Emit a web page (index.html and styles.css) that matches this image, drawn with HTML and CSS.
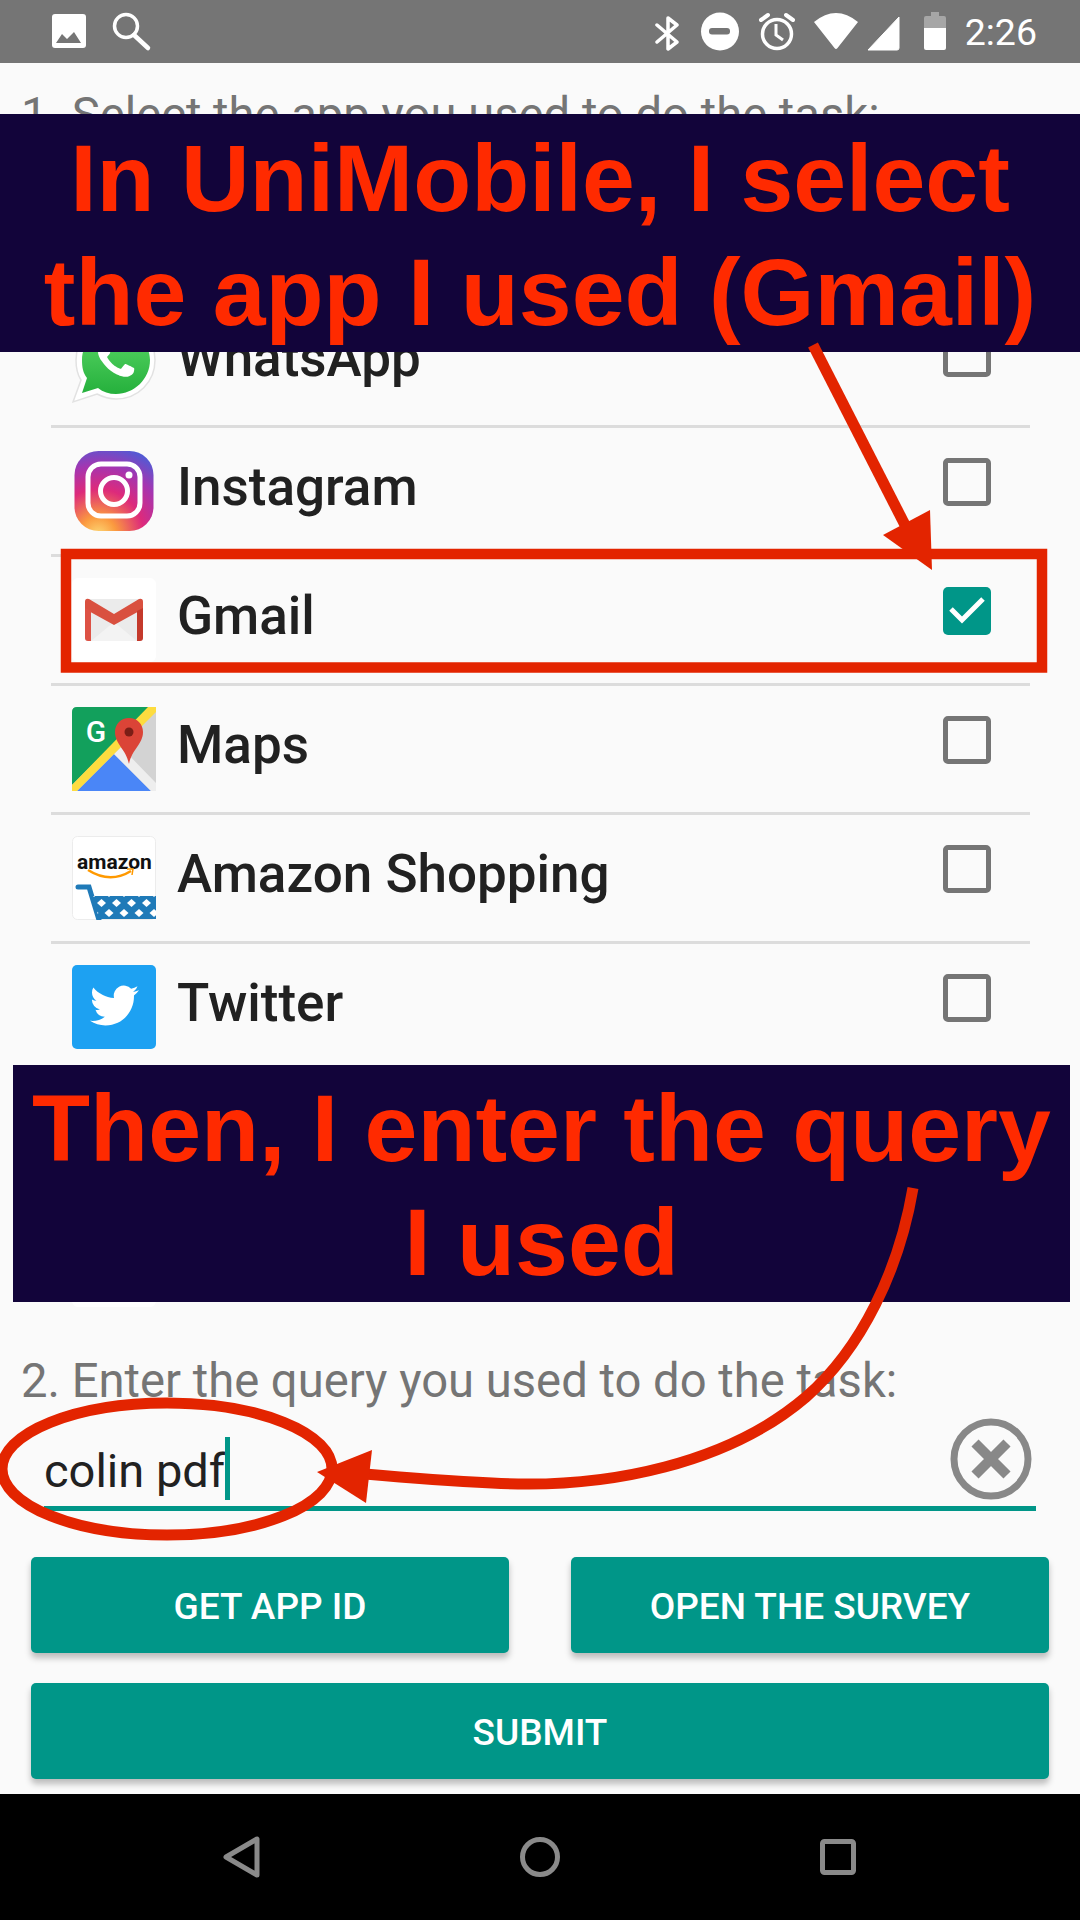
FILE: index.html

```html
<!DOCTYPE html>
<html lang="en">
<head>
  <meta charset="UTF-8">
  <meta name="viewport" content="width=device-width, initial-scale=1.0">
  <title>UniMobile</title>
  <link rel="stylesheet" href="styles.css">
</head>
<body>
  <div class="screen">

    <div class="status-bar">
      <svg class="status-left" viewBox="52 12 100 40">
        <rect x="52" y="14" width="34" height="34" rx="3" fill="#fff"/>
        <polygon points="56,43 62,34 67,39 74,32 81,43" fill="#757575"/>
        <circle cx="126" cy="26" r="11.5" fill="none" stroke="#fff" stroke-width="3.5"/>
        <line x1="134" y1="35" x2="148" y2="48" stroke="#fff" stroke-width="4.5" stroke-linecap="round"/>
      </svg>
      <div class="status-right">
        <svg class="status-icons" viewBox="654 12 291 40">
          <path d="M656 25 L676 42 L667 49 V18 L676 25 L656 42" fill="none" stroke="#fff" stroke-width="3.5" stroke-linejoin="round" stroke-linecap="round"/>
          <circle cx="719" cy="31.5" r="19" fill="#fff"/>
          <rect x="708" y="28" width="21" height="6.5" rx="3" fill="#757575"/>
          <circle cx="776" cy="34" r="14.5" fill="none" stroke="#fff" stroke-width="3.5"/>
          <path d="M775 24 V35 L782 40" fill="none" stroke="#fff" stroke-width="3"/>
          <path d="M760 20 L767 15 M785 15 L792 20" stroke="#fff" stroke-width="4" stroke-linecap="round"/>
          <path d="M813 22 Q835 4 857 22 L836.500 48 Q835 50 833.500 48 Z" fill="#fff"/>
          <path d="M898 17 V48 Q898 50 896 50 H867 Z" fill="#fff" stroke="#fff" stroke-width="1" stroke-linejoin="round"/>
          <path d="M930 16 V12 H938 V16 H943 Q945 16 945 18 V28 H923 V18 Q923 16 925 16 Z" fill="#a6a6a6"/>
          <path d="M923 28 H945 V48 Q945 50 943 50 H925 Q923 50 923 48 Z" fill="#fff"/>
        </svg>
        <span class="clock">2:26</span>
      </div>
    </div>

    <main class="content">
      <p class="question">1. Select the app you used to do the task:</p>

      <ul class="app-list">
        <li class="app-row"></li>

        <li class="app-row">
          <svg class="app-icon" viewBox="0 0 84 84">
            <defs>
              <linearGradient id="waGreen" x1="0" y1="0" x2="0" y2="1">
                <stop offset="0" stop-color="#5cd868"/>
                <stop offset="1" stop-color="#25b03c"/>
              </linearGradient>
            </defs>
            <path d="M44 1 C66 1 83 18 83 40 C83 62 66 79 44 79 C37 79 31 77 25 74 L1 82 L9 60 C5 54 4 47 4 40 C4 18 22 1 44 1 Z" fill="#fff" stroke="#e2e2e2" stroke-width="1.500"/>
            <path d="M44 7 C62 7 78 22 78 40 C78 59 62 74 44 74 C37 74 31 72 26 68 L10 73 L15 58 C11 53 10 47 10 40 C10 22 25 7 44 7 Z" fill="url(#waGreen)"/>
            <g transform="translate(44 40) scale(3) translate(-12 -12)">
              <path d="M17.472 14.382c-.297-.149-1.758-.867-2.03-.967-.273-.099-.471-.148-.67.15-.197.297-.767.966-.94 1.164-.173.199-.347.223-.644.075-.297-.15-1.255-.463-2.39-1.475-.883-.788-1.48-1.761-1.653-2.059-.173-.297-.018-.458.13-.606.134-.133.298-.347.446-.52.149-.174.198-.298.298-.497.099-.198.05-.371-.025-.52-.075-.149-.669-1.612-.916-2.207-.242-.579-.487-.5-.669-.51-.173-.008-.371-.01-.57-.01-.198 0-.52.074-.792.372-.272.297-1.04 1.016-1.04 2.479 0 1.462 1.065 2.875 1.213 3.074.149.198 2.096 3.2 5.077 4.487.709.306 1.262.489 1.694.625.712.227 1.36.195 1.871.118.571-.085 1.758-.719 2.006-1.413.248-.694.248-1.289.173-1.413-.074-.124-.272-.198-.57-.347z" fill="#fff"/>
            </g>
          </svg>
          <span class="app-name">WhatsApp</span>
          <span class="checkbox"></span>
        </li>

        <li class="app-row">
          <svg class="app-icon" viewBox="0 0 84 84">
            <defs>
              <radialGradient id="igGlow" cx="0.3" cy="1.05" r="1.15">
                <stop offset="0" stop-color="#fdd976"/>
                <stop offset="0.2" stop-color="#fb9a3f"/>
                <stop offset="0.5" stop-color="#dd2a7b"/>
                <stop offset="0.75" stop-color="#a535b0"/>
                <stop offset="1" stop-color="#4f5bd5"/>
              </radialGradient>
            </defs>
            <rect x="2.500" y="2" width="79" height="80" rx="24" fill="url(#igGlow)"/>
            <rect x="16" y="15" width="52" height="52" rx="13" fill="none" stroke="#fff" stroke-width="5"/>
            <circle cx="42" cy="42" r="13.500" fill="none" stroke="#fff" stroke-width="5"/>
            <circle cx="57" cy="26" r="3.500" fill="#fff"/>
          </svg>
          <span class="app-name">Instagram</span>
          <span class="checkbox"></span>
        </li>

        <li class="app-row">
          <svg class="app-icon" viewBox="0 0 84 84">
            <rect width="84" height="84" rx="6" fill="#fff"/>
            <rect x="13" y="21" width="58" height="42" rx="3" fill="#ebebeb"/>
            <polygon points="19,63 42,44 65,63" fill="#f3f3f3"/>
            <path d="M13 24 Q13 20 17 21 L42 36 L67 21 Q71 20 71 24 V31 L42 47 L13 31 Z" fill="#d9503f"/>
            <path d="M13 30 L19 33 V63 H16 Q13 63 13 60 Z" fill="#dd5245"/>
            <path d="M71 30 L65 33 V63 H68 Q71 63 71 60 Z" fill="#c4392b"/>
          </svg>
          <span class="app-name">Gmail</span>
          <span class="checkbox checked">
            <svg viewBox="0 0 48 48"><path d="M8 22 L19 33 L40 12" fill="none" stroke="#fff" stroke-width="5"/></svg>
          </span>
        </li>

        <li class="app-row">
          <svg class="app-icon" viewBox="0 0 84 84">
            <rect width="84" height="84" rx="5" fill="#d3d3d3"/>
            <path d="M5 0 H78 L0 78 V5 Q0 0 5 0 Z" fill="#12a05c"/>
            <polygon points="42,47 79,84 5,84" fill="#4a86f7"/>
            <polygon points="42,47 49,40 84,76 84,84 79,84" fill="#eeeeee"/>
            <polygon points="76,0 84,0 84,5 5,84 0,84 0,78" fill="#fddc3f"/>
            <path d="M57 11 C65 11 71 17 71 25 C71 37 60 42 57 57 C54 42 43 37 43 25 C43 17 49 11 57 11 Z" fill="#db4437"/>
            <circle cx="57" cy="25" r="4.500" fill="#7b1e16"/>
            <text class="maps-g" x="24" y="35">G</text>
          </svg>
          <span class="app-name">Maps</span>
          <span class="checkbox"></span>
        </li>

        <li class="app-row">
          <svg class="app-icon" viewBox="0 0 84 84">
            <defs>
              <pattern id="cartMesh" width="15" height="20" patternUnits="userSpaceOnUse" x="22" y="62">
                <rect width="15" height="20" fill="#1f7ab8"/>
                <polygon points="7.500,1 12,5 7.500,9 3,5" fill="#fff"/>
                <polygon points="0,11 4.500,15 0,19" fill="#fff"/>
                <polygon points="15,11 10.500,15 15,19" fill="#fff"/>
              </pattern>
            </defs>
            <rect x="0.500" y="0.500" width="83" height="83" rx="5" fill="#fff" stroke="#ececec"/>
            <text class="amazon-word" x="5" y="33">amazon</text>
            <path d="M16 34 Q38 48 59 35" fill="none" stroke="#f90" stroke-width="2.500"/>
            <path d="M55 33 L61 33 L60 39" fill="none" stroke="#f90" stroke-width="1.500"/>
            <path d="M6 51 H17 L27 84" fill="none" stroke="#1f7ab8" stroke-width="5" stroke-linecap="round"/>
            <polygon points="21,60 84,60 84,83 27,83" fill="url(#cartMesh)"/>
          </svg>
          <span class="app-name">Amazon Shopping</span>
          <span class="checkbox"></span>
        </li>

        <li class="app-row">
          <svg class="app-icon" viewBox="0 0 84 84">
            <rect width="84" height="84" rx="5" fill="#1da1f2"/>
            <g transform="translate(18 16) scale(2.040)">
              <path d="M23.953 4.57a10 10 0 01-2.825.775 4.958 4.958 0 002.163-2.723c-.951.555-2.005.959-3.127 1.184a4.92 4.92 0 00-8.384 4.482C7.69 8.095 4.067 6.13 1.64 3.162a4.822 4.822 0 00-.666 2.475c0 1.71.87 3.213 2.188 4.096a4.904 4.904 0 01-2.228-.616v.06a4.923 4.923 0 003.946 4.827 4.996 4.996 0 01-2.212.085 4.936 4.936 0 004.604 3.417 9.867 9.867 0 01-6.102 2.105c-.39 0-.779-.023-1.17-.067a13.995 13.995 0 007.557 2.209c9.053 0 13.998-7.496 13.998-13.985 0-.21 0-.42-.015-.63A9.935 9.935 0 0024 4.59z" fill="#fff"/>
            </g>
          </svg>
          <span class="app-name">Twitter</span>
          <span class="checkbox"></span>
        </li>

        <li class="app-row"></li>

        <li class="app-row">
          <svg class="app-icon" viewBox="0 0 84 84"><rect width="84" height="84" rx="6" fill="#fff"/></svg>
        </li>
      </ul>

      <p class="question question-two">2. Enter the query you used to do the task:</p>

      <div class="query-field">
        <span class="query-text">colin pdf</span>
        <span class="caret"></span>
        <svg class="clear-icon" viewBox="0 0 82 82">
          <circle cx="41" cy="41" r="37" fill="none" stroke="#888" stroke-width="7"/>
          <path d="M25 25 L57 57 M57 25 L25 57" stroke="#888" stroke-width="10"/>
        </svg>
      </div>

      <div class="button-row">
        <button class="btn">GET APP ID</button>
        <button class="btn">OPEN THE SURVEY</button>
      </div>
      <div class="button-row">
        <button class="btn">SUBMIT</button>
      </div>
    </main>

    <div class="nav-bar">
      <svg class="nav-icon" viewBox="0 0 44 44"><path d="M37 4 V40 L6 22 Z" fill="none" stroke="#8a8a8a" stroke-width="5" stroke-linejoin="round"/></svg>
      <svg class="nav-icon" viewBox="0 0 44 44"><circle cx="22" cy="22" r="17.500" fill="none" stroke="#8a8a8a" stroke-width="5"/></svg>
      <svg class="nav-icon" viewBox="0 0 44 44"><rect x="6.500" y="6.500" width="31" height="31" rx="2" fill="none" stroke="#8a8a8a" stroke-width="5"/></svg>
    </div>

    <div class="banner banner-top">In UniMobile, I select<br>the app I used (Gmail)</div>
    <div class="banner banner-bottom">Then, I enter the query<br>I used</div>

    <svg class="annotations" viewBox="0 0 1080 1920">
      <rect x="66" y="554" width="976" height="113.500" fill="none" stroke="#e32400" stroke-width="10.500"/>
      <path d="M813 345 L905 525" fill="none" stroke="#e32400" stroke-width="11"/>
      <polygon points="932,570 930,510 883,535" fill="#e32400"/>
      <ellipse cx="167" cy="1469" rx="165" ry="66" fill="none" stroke="#e32400" stroke-width="11"/>
      <path d="M913 1188 C899 1270 862 1348 806 1397 C730 1462 610 1490 492 1483 C450 1481 410 1478 365 1474" fill="none" stroke="#e32400" stroke-width="11"/>
      <polygon points="317,1472 372,1450 366,1503" fill="#e32400"/>
    </svg>
  </div>
</body>
</html>
```

FILE: styles.css

```css
body {
  margin: 0;
  background-color: #000;
  font-family: Roboto, sans-serif;
}
.screen {
  position: relative;
  display: flex;
  flex-direction: column;
  width: 1080px;
  height: 1920px;
  overflow: hidden;
  background-color: #fafafa;
}

.status-bar {
  display: flex;
  justify-content: space-between;
  align-items: center;
  height: 63px;
  padding: 0 43px 0 52px;
  background-color: #757575;
}
.status-left {
  width: 100px;
  height: 40px;
}
.status-right {
  display: flex;
  align-items: center;
  gap: 19px;
}
.status-icons {
  width: 291px;
  height: 40px;
}
.clock {
  font-size: 37.5px;
  color: #fff;
  line-height: 40px;
}

.content {
  flex: 1;
}
.question {
  margin: 0;
  padding: 24px 0 27px 21px;
  font-size: 47.2px;
  line-height: 56px;
  color: #757575;
}
.question-two {
  padding: 25px 0 2px 21px;
}

.app-list {
  list-style: none;
  margin: 0 50px 0 51px;
  padding: 0;
}
.app-row {
  display: flex;
  align-items: center;
  height: 126px;
  padding: 0 39px 0 21px;
  border-bottom: 3px solid #dcdcdc;
}
.app-row:last-child {
  border-bottom: none;
}
.app-icon {
  width: 84px;
  height: 84px;
  flex-shrink: 0;
}
.app-name {
  flex: 1;
  margin: 0 0 8px 21px;
  font-size: 53px;
  font-weight: 500;
  line-height: 60px;
  color: #212121;
}
.checkbox {
  width: 48px;
  height: 48px;
  margin-bottom: 18px;
  box-sizing: border-box;
  border: 5px solid #757575;
  border-radius: 5px;
}
.checkbox.checked {
  border: none;
  background-color: #009688;
}
.checkbox svg {
  display: block;
}
.maps-g {
  font-family: Roboto, sans-serif;
  font-size: 30px;
  font-weight: 500;
  fill: #fff;
  text-anchor: middle;
}
.amazon-word {
  font-family: Roboto, sans-serif;
  font-size: 21px;
  font-weight: 700;
  fill: #111;
}

.query-field {
  display: flex;
  align-items: center;
  height: 95px;
  margin: 0 44px;
  padding-right: 4px;
  border-bottom: 5px solid #009688;
}
.query-text {
  margin-top: 25px;
  font-size: 47px;
  line-height: 60px;
  color: #212121;
}
.caret {
  width: 5px;
  height: 63px;
  margin-top: 20px;
  background-color: #009688;
}
.clear-icon {
  width: 82px;
  height: 82px;
  margin-left: auto;
}

.button-row {
  display: flex;
  gap: 62px;
  margin: 30px 31px 0;
}
.query-field + .button-row {
  margin-top: 46px;
}
.btn {
  flex: 1;
  height: 96px;
  padding-top: 4px;
  border: none;
  border-radius: 5px;
  background-color: #009688;
  box-shadow: 0 5px 6px rgba(0, 0, 0, 0.25);
  font-family: Roboto, sans-serif;
  font-size: 37px;
  font-weight: 500;
  color: #fff;
}

.nav-bar {
  display: grid;
  grid-template-columns: repeat(3, 298px);
  justify-content: center;
  justify-items: center;
  align-items: center;
  height: 126px;
  background-color: #000;
}
.nav-icon {
  width: 44px;
  height: 44px;
}

/* the tutorial callouts sit on top of the app screenshot */
.banner {
  position: absolute;
  box-sizing: border-box;
  height: 238px;
  background-color: #12043a;
  color: #ff2a00;
  font-family: "Liberation Sans", Arial, sans-serif;
  font-size: 95px;
  font-weight: 700;
  line-height: 114px;
  text-align: center;
}
.banner-top {
  top: 114px;
  left: 0;
  width: 1080px;
  padding-top: 7px;
}
.banner-bottom {
  top: 1065px;
  left: 13px;
  width: 1057px;
  height: 237px;
  padding-top: 6px;
}
.annotations {
  position: absolute;
  top: 0;
  left: 0;
  width: 1080px;
  height: 1920px;
  pointer-events: none;
}
```
